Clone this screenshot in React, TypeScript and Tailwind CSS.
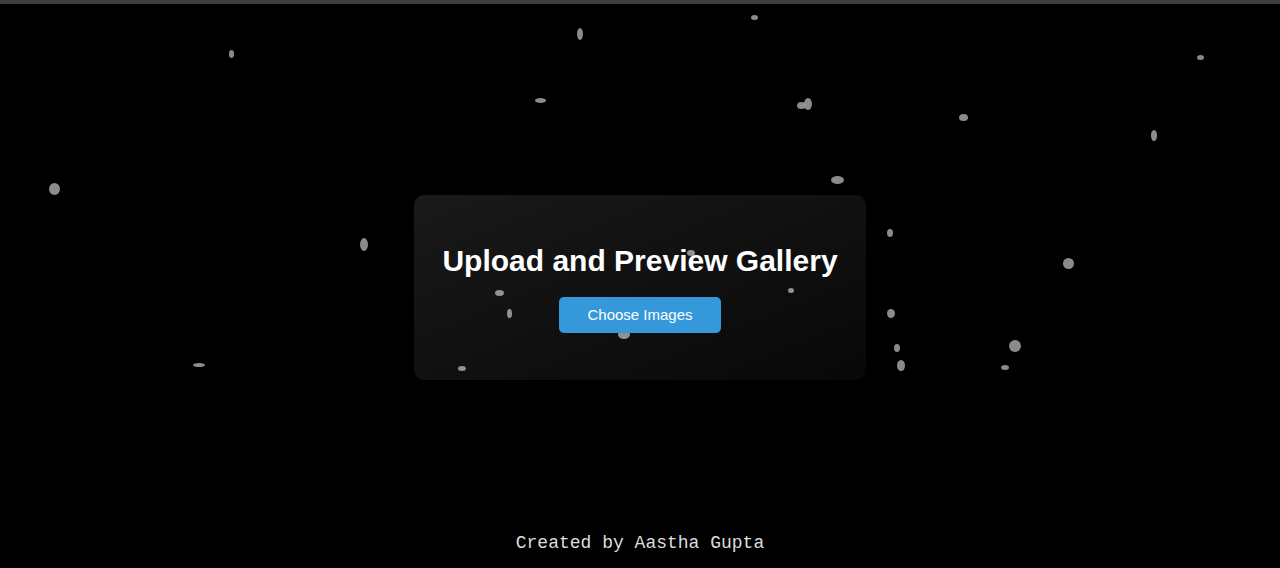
const particles = [
  { x: 754, y: 17, w: 7, h: 5 },
  { x: 580, y: 34, w: 6, h: 12 },
  { x: 231, y: 54, w: 5, h: 8 },
  { x: 540, y: 100, w: 11, h: 5 },
  { x: 801, y: 105, w: 9, h: 7 },
  { x: 808, y: 104, w: 8, h: 12 },
  { x: 1200, y: 57, w: 7, h: 5 },
  { x: 963, y: 117, w: 9, h: 7 },
  { x: 1154, y: 135, w: 6, h: 11 },
  { x: 54, y: 189, w: 11, h: 12 },
  { x: 837, y: 180, w: 13, h: 8 },
  { x: 364, y: 244, w: 8, h: 13 },
  { x: 890, y: 233, w: 6, h: 8 },
  { x: 1068, y: 263, w: 11, h: 11 },
  { x: 691, y: 253, w: 8, h: 6 },
  { x: 499, y: 293, w: 9, h: 6 },
  { x: 791, y: 290, w: 6, h: 5 },
  { x: 509, y: 313, w: 5, h: 9 },
  { x: 891, y: 313, w: 8, h: 9 },
  { x: 624, y: 334, w: 12, h: 9 },
  { x: 897, y: 348, w: 6, h: 8 },
  { x: 1015, y: 346, w: 12, h: 12 },
  { x: 199, y: 365, w: 12, h: 4 },
  { x: 901, y: 365, w: 8, h: 11 },
  { x: 1005, y: 367, w: 8, h: 5 },
  { x: 462, y: 368, w: 8, h: 5 },
];

export default function App() {
  return (
    <div className="relative min-h-screen h-[568px] bg-black flex flex-col overflow-hidden font-['Liberation_Sans',Arial,sans-serif]">
      {/* Snow layer */}
      <div className="absolute inset-0 pointer-events-none">
        {particles.map((p, i) => (
          <span
            key={i}
            className="absolute rounded-[50%] bg-[#9a9a9a]/90"
            style={{ left: p.x - p.w / 2, top: p.y - p.h / 2, width: p.w, height: p.h }}
          />
        ))}
      </div>

      <div className="relative h-1 bg-[#3b403b] shrink-0" />

      <div className="relative flex-1 grid grid-rows-[1fr_auto_1fr] justify-items-center pt-[3px]">
        <div />
        <div className="w-[452px] rounded-[10px] bg-linear-to-br from-white/[0.1] to-white/[0.03] pt-[49px] pb-[47px] flex flex-col items-center gap-[19px]">
          <h1 className="text-[30px] font-bold text-white leading-[34px]">Upload and Preview Gallery</h1>
          <button className="h-9 px-7 rounded-[5px] bg-[#3498db] text-white text-[15px]">Choose Images</button>
        </div>
        <div className="flex items-end justify-center pb-[11px]">
          <p className="font-['Liberation_Mono','Courier_New',monospace] text-[18px] text-[#dddddd]">Created by Aastha Gupta</p>
        </div>
      </div>
    </div>
  );
}
